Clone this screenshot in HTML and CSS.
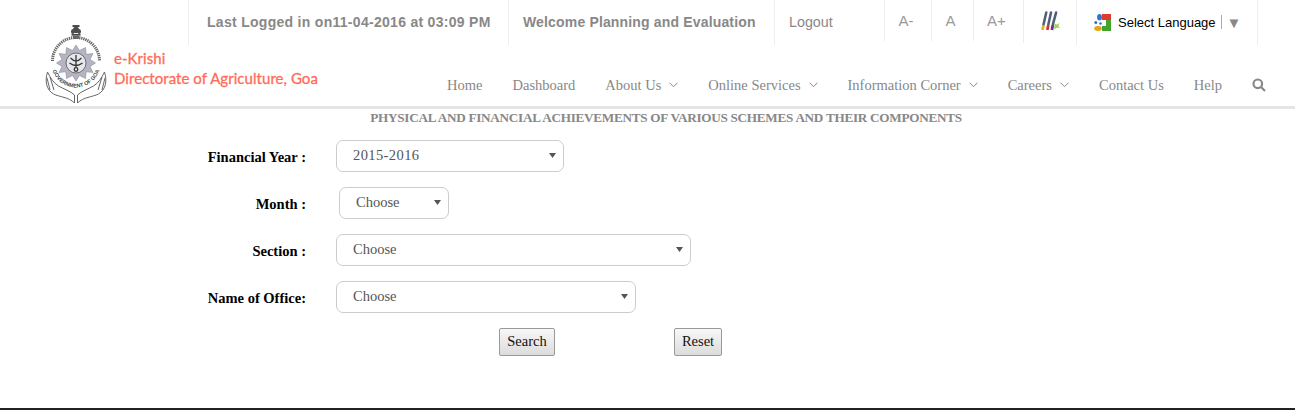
FILE: index.html
```html
<!DOCTYPE html>
<html lang="en">
<head>
<meta charset="utf-8">
<title>e-Krishi</title>
<link rel="stylesheet" href="styles.css">
</head>
<body>
<header class="site-header">
  <svg class="emblem" viewBox="0 0 62 78" aria-hidden="true">
    <defs>
      <path id="ringBottom" d="M6.500 38a24.500 24.500 0 0 0 49 0"/>
    </defs>
    <g fill="#4d4d4d">
      <rect x="27.500" y="0" width="7" height="2"/>
      <ellipse cx="31" cy="5" rx="3" ry="3.200"/>
      <ellipse cx="27.800" cy="6.500" rx="1.800" ry="2.600"/>
      <ellipse cx="34.200" cy="6.500" rx="1.800" ry="2.600"/>
      <rect x="26.500" y="9" width="9" height="1.600"/>
      <path d="M27.500 10.600h7l-.8 3.400h-5.400z" fill="#666"/>
    </g>
    <path d="M7.500 36a23.500 23.500 0 0 1 47 0" fill="none" stroke="#666" stroke-width="3" stroke-dasharray="1.300 .8"/>
    <text class="ring-text"><textPath href="#ringBottom" startOffset="50%" text-anchor="middle">GOVERNMENT OF GOA</textPath></text>
    <path fill="#b4b4c2" stroke="#80808e" stroke-width=".5" d="M31 20l3.500 5.500 6-3 .7 6.700 6.800-.7-3 6 5.500 3.500-5.500 3.500 3 6-6.800-.7-.7 6.700-6-3L31 56l-3.500-5.500-6 3-.7-6.700-6.800.7 3-6L11.500 38l5.500-3.500-3-6 6.800.7.700-6.700 6 3z"/>
    <circle cx="31" cy="38" r="10" fill="#e6e6ec" stroke="#555" stroke-width=".8"/>
    <g fill="none" stroke="#333" stroke-width="1.300">
      <path d="M31 30v12M25.500 33c2 2 4 3 5.500 3s3.500-1 5.500-3M24.500 38c2 1.500 4.500 2.500 6.500 2.500s4.500-1 6.500-2.500"/>
      <circle cx="31" cy="44.500" r="1.800"/>
    </g>
    <g fill="none" stroke="#666" stroke-width="1">
      <path d="M2.500 47c-3 9-1 18 6 22 6 3 15 3 21 9v-8c-4-4-11-6-16-9-5-3-8-8-11-14z"/>
      <path d="M59.500 47c3 9 1 18-6 22-6 3-15 3-21 9v-8c4-4 11-6 16-9 5-3 8-8 11-14z"/>
      <path d="M2 53l3 12M5 52l4 13M60 53l-3 12M57 52l-4 13"/>
    </g>
  </svg>
  <a class="brand" href="#"><span>e-Krishi</span><span>Directorate of Agriculture, Goa</span></a>
  <div class="topbar">
    <div class="cell cell-login">Last Logged in on11-04-2016 at 03:09 PM</div>
    <div class="cell cell-welcome">Welcome Planning and Evaluation</div>
    <a class="cell cell-logout" href="#">Logout</a>
    <a class="cell size size-a" href="#">A-</a>
    <a class="cell size size-b" href="#">A</a>
    <a class="cell size size-c" href="#">A+</a>
    <a class="cell cell-theme" href="#" aria-label="Theme">
      <svg class="pens" viewBox="0 0 18 19" fill="none" aria-hidden="true">
        <path stroke="#4f5f75" stroke-width="2.400" stroke-linecap="round" d="M5 1.500L2.300 13M9.500 1.500L6.900 13M14.300 1.500L11.200 13"/>
        <path stroke="#e3b023" stroke-width="2.600" d="M2.300 13.500L1.400 18"/>
        <path stroke="#d8302c" stroke-width="2.600" d="M6.900 13.500L6 18"/>
        <path stroke="#5b2fa0" stroke-width="2.600" d="M11.200 13.500L10.300 18"/>
        <path fill="#a5cc5a" d="M12.500 11.500l2.500 1.500 2.500-1.500-1 3 1.500 1.500-3-.2-2.500 1.700.3-3z"/>
      </svg>
    </a>
    <div class="cell cell-lang">
      <svg class="gicon" viewBox="0 0 17 17" aria-hidden="true">
        <rect x="8" y="0" width="9" height="6" fill="#dd3b2c"/>
        <path d="M12 6h5v11H8v-5h4z" fill="#43a32b"/>
        <path d="M8 6h4v6H8z" fill="#fff"/>
        <ellipse cx="5.500" cy="3.200" rx="2.400" ry="3.200" fill="#2f74d0"/>
        <circle cx="1.800" cy="8.500" r="1.500" fill="#2f74d0"/>
        <circle cx="6.500" cy="9.500" r="1.300" fill="#2f74d0"/>
        <ellipse cx="4" cy="14.500" rx="3.800" ry="2.400" fill="#e8a317"/>
      </svg>
      <span class="lang-text">Select Language</span>
      <span class="lang-sep"></span>
      <span class="lang-arrow">▼</span>
    </div>
  </div>
  <nav class="mainnav">
    <a href="#">Home</a>
    <a href="#">Dashboard</a>
    <a href="#">About Us <svg class="chev" viewBox="0 0 9 6"><path d="M.5.700L4.500 4.700 8.500.700"/></svg></a>
    <a href="#">Online Services <svg class="chev" viewBox="0 0 9 6"><path d="M.5.700L4.500 4.700 8.500.700"/></svg></a>
    <a href="#">Information Corner <svg class="chev" viewBox="0 0 9 6"><path d="M.5.700L4.500 4.700 8.500.700"/></svg></a>
    <a href="#">Careers <svg class="chev" viewBox="0 0 9 6"><path d="M.5.700L4.500 4.700 8.500.700"/></svg></a>
    <a href="#">Contact Us</a>
    <a href="#">Help</a>
    <a href="#" aria-label="Search"><svg class="search" viewBox="0 0 14 14"><circle cx="5.800" cy="5.800" r="4.300"/><path d="M9 9l4 4"/></svg></a>
  </nav>
</header>
<main class="content">
  <h1 class="page-title">PHYSICAL AND FINANCIAL ACHIEVEMENTS OF VARIOUS SCHEMES AND THEIR COMPONENTS</h1>
  <form class="filter">
    <label class="field-label" for="fy">Financial Year :</label>
    <select id="fy" class="sel sel-year"><option>2015-2016</option></select>
    <label class="field-label" for="mo">Month :</label>
    <select id="mo" class="sel sel-month"><option>Choose</option></select>
    <label class="field-label" for="se">Section :</label>
    <select id="se" class="sel sel-section"><option>Choose</option></select>
    <label class="field-label" for="of">Name of Office:</label>
    <select id="of" class="sel sel-office"><option>Choose</option></select>
    <div class="actions">
      <button type="button" class="btn btn-search">Search</button>
      <button type="button" class="btn btn-reset">Reset</button>
    </div>
  </form>
</main>
<footer class="footer"></footer>
</body>
</html>
```
FILE: styles.css
```css
* { box-sizing: border-box; }
html, body { margin: 0; padding: 0; }
body { width: 1295px; height: 410px; overflow: hidden; background: #fff; display: flex; flex-direction: column; font-family: "Liberation Serif", serif; }
a { text-decoration: none; color: inherit; }

.site-header { height: 109px; border-bottom: 3px solid #e5e5e5; display: grid; grid-template-columns: 114px 74px 131px 1fr; grid-template-rows: 45px 61px; }
.emblem { grid-column: 1; grid-row: 1 / 3; width: 62px; height: 78px; margin: 25px 0 0 45px; }
.ring-text { font-family: "Liberation Sans", sans-serif; font-size: 5.400px; font-weight: 700; fill: #444; }
.brand { grid-column: 2 / 4; grid-row: 2; display: flex; flex-direction: column; white-space: nowrap; color: #ff6c57; font-family: "Lato", sans-serif; font-size: 15px; letter-spacing: .05px; -webkit-text-stroke: .3px #ff6c57; line-height: 20px; margin-top: 3px; }

.topbar { grid-column: 3 / 5; grid-row: 1; display: flex; align-items: flex-start; font-family: "Liberation Sans", sans-serif; color: #888; }
.cell { height: 45px; border-left: 1px solid #eee; display: flex; align-items: center; font-size: 14px; padding-bottom: 2px; }
.cell-login { width: 320px; padding-left: 18px; font-weight: 700; letter-spacing: .29px; white-space: nowrap; }
.cell-welcome { width: 266px; padding-left: 14px; font-weight: 700; letter-spacing: .16px; white-space: nowrap; }
.cell-logout { width: 110px; padding-left: 14px; font-size: 14.300px; }
.size { height: 41px; justify-content: center; font-size: 15px; padding: 0 4px 0 0; color: #999; }
.size-a { width: 47px; }
.size-b { width: 42px; }
.size-c { width: 50px; }
.cell-theme { width: 53px; height: 43px; justify-content: center; padding: 0 0 1px; }
.pens { width: 19px; height: 20px; }
.cell-lang { width: 182px; border-right: 1px solid #eee; padding-left: 17px; padding-bottom: 1px; color: #000; }
.gicon { width: 17px; height: 17px; flex: none; }
.lang-text { margin-left: 7px; font-size: 13px; white-space: nowrap; }
.lang-sep { width: 1px; height: 14px; background: #aaa; margin-left: 5px; }
.lang-arrow { color: #888; font-size: 15px; margin-left: 5px; }

.mainnav { grid-column: 4; grid-row: 2; display: flex; align-items: center; justify-content: flex-end; gap: 30px; padding: 20px 29px 0 0; height: 60px; font-size: 14.500px; color: #888; white-space: nowrap; }
.mainnav a { display: flex; align-items: center; gap: 8px; }
.chev { width: 9px; height: 6px; fill: none; stroke: #888; stroke-width: 1; }
.search { width: 14px; height: 14px; fill: none; stroke: #888; stroke-width: 2.200; }

.content { flex: 1; }
.page-title { margin: 0; height: 31px; text-align: center; font-size: 13.200px; letter-spacing: -.28px; line-height: 17px; font-weight: 700; color: #888; padding-left: 37px; white-space: nowrap; }
.filter { display: grid; grid-template-columns: 306px 1fr; column-gap: 30px; row-gap: 15px; align-items: center; }
.field-label { text-align: right; font-weight: 700; font-size: 14.500px; color: #000; padding-top: 2px; }
.sel { appearance: none; height: 32px; border: 1px solid #ccc; border-radius: 7px; background: #fff url("data:image/svg+xml,%3Csvg xmlns='http://www.w3.org/2000/svg' width='7' height='5'%3E%3Cpath d='M0 0h7L3.500 5z' fill='%23555'/%3E%3C/svg%3E") no-repeat right 7px top 12px; color: #555; padding: 0 20px 2px 16px; font-family: "Liberation Serif", serif; font-size: 14.500px; justify-self: start; }
.sel-year { width: 228px; letter-spacing: .4px; }
.sel-month { width: 110px; margin-left: 3px; }
.sel-section { width: 355px; }
.sel-office { width: 300px; }
.actions { grid-column: 1 / 3; display: flex; gap: 119px; padding-left: 499px; }
.btn { height: 28px; padding: 0 0 2px; border: 1px solid #999; border-radius: 2px; background: linear-gradient(#f7f7f7, #dcdcdc); font-family: "Liberation Serif", serif; font-size: 14.500px; color: #111; }
.btn-search { width: 56px; }
.btn-reset { width: 48px; }
.footer { height: 2px; background: #222; }
```
